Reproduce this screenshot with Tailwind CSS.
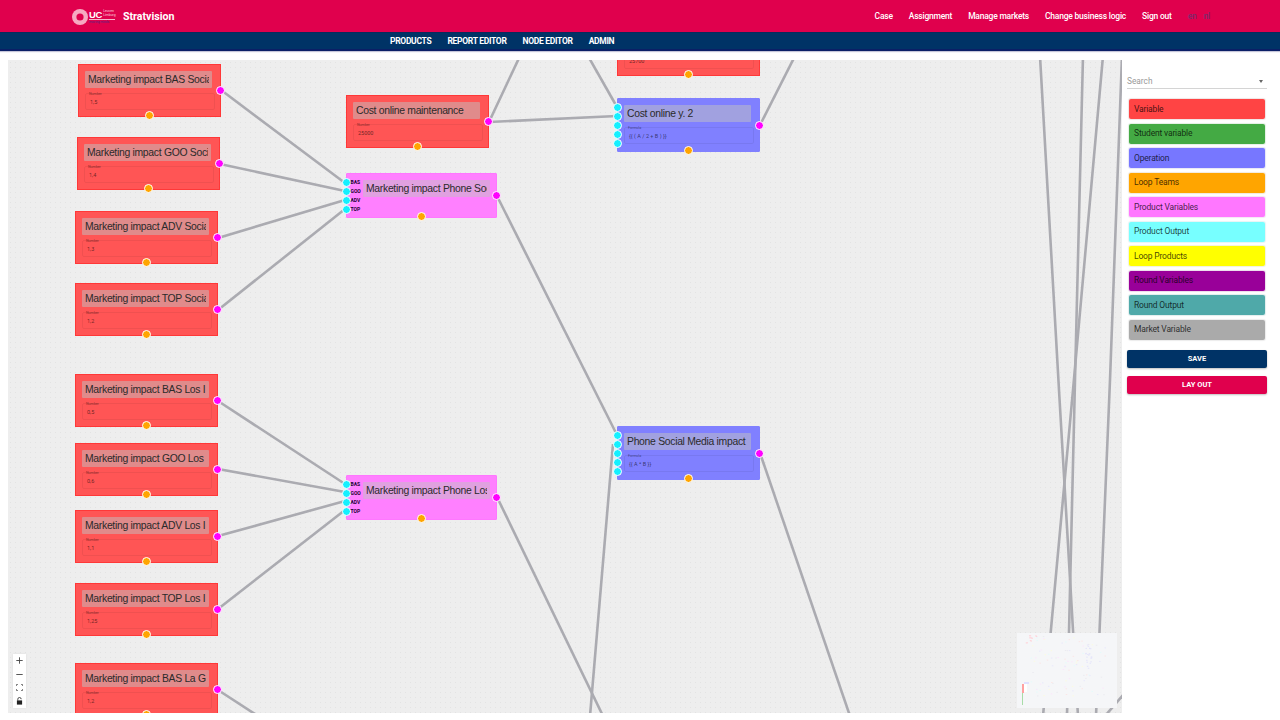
<!DOCTYPE html>
<html lang="en">
<head>
    <meta charset="UTF-8">
    <title>Stratvision</title>
    <script src="https://cdn.jsdelivr.net/npm/@tailwindcss/browser@4"></script>
</head>
<body class="bg-white h-[720px] overflow-hidden font-['Roboto',sans-serif] text-gray-800">

<!-- Top bar -->
<header class="h-[32px] pt-[1px] bg-[#e0004d] flex items-center justify-between pl-[71px] pr-[70px] text-white">
    <div class="flex items-center">
        <svg width="18" height="18" viewBox="0 0 18 18" class="shrink-0"><circle cx="9" cy="9" r="8" fill="#f6a9c1"/><circle cx="9" cy="9" r="3.6" fill="#e0004d"/></svg>
        <div class="w-[26px] leading-none">
            <div class="flex items-center">
                <span class="text-[9.5px] leading-[9px] font-bold font-['Liberation_Sans',sans-serif] tracking-[-0.3px]">UC</span>
                <span class="ml-[1px] text-[3.4px] leading-[3.6px] text-[#fbd3df] whitespace-nowrap">Leuven<br>Limburg</span>
            </div>
            <div class="border-t border-white/70 text-[3.2px] leading-[4px] text-[#4a2a86] whitespace-nowrap">moving minds</div>
        </div>
        <span class="ml-[8px] text-[10.6px] font-bold">Stratvision</span>
    </div>
    <nav class="flex items-center gap-4 text-[8.5px] tracking-[-0.22px] font-medium whitespace-nowrap">
        <a>Case</a>
        <a>Assignment</a>
        <a>Manage markets</a>
        <a>Change business logic</a>
        <a>Sign out</a>
        <span class="flex gap-[7px] text-[#7d2a6c]"><a>en</a><a>nl</a></span>
    </nav>
</header>

<!-- Sub nav -->
<div class="h-[19px] pt-[1px] bg-[#003366] border-t border-t-[#0a2a5c] border-b-2 border-b-[#0b1f66] flex items-center gap-4 pl-[390px] text-[8.5px] tracking-[-0.3px] font-bold text-white whitespace-nowrap shadow-[0_1px_1px_#c5c5d8]">
    <a>PRODUCTS</a>
    <a>REPORT EDITOR</a>
    <a>NODE EDITOR</a>
    <a>ADMIN</a>
</div>

<main class="flex pt-[9px]">
    <!-- Flow canvas -->
    <div id="canvas" class="relative ml-[8px] w-[1114px] h-[653px] overflow-hidden bg-[#eeeeee] bg-[radial-gradient(circle,#e3e3e3_0.5px,transparent_0.7px)] bg-[length:5px_5px]">
        <svg id="edges" class="absolute inset-0" width="1114" height="653" viewBox="8 60 1114 653" fill="none" stroke="#ababb1" stroke-width="2.6"></svg>
        <div id="nodes"></div>

        <!-- zoom controls -->
        <div class="absolute left-[5px] top-[594px] w-[13px] bg-white flex flex-col text-black shadow-[0_0_2px_rgba(0,0,0,0.08)]">
            <button class="h-[13.5px] flex items-center justify-center">
                <svg width="7" height="7" viewBox="0 0 7 7" stroke="#444" stroke-width="0.9"><path d="M3.5 0.3v6.4M0.3 3.5h6.4"/></svg>
            </button>
            <button class="h-[13.5px] flex items-center justify-center">
                <svg width="7" height="7" viewBox="0 0 7 7" stroke="#444" stroke-width="0.9"><path d="M0.3 3.5h6.4"/></svg>
            </button>
            <button class="h-[13.5px] flex items-center justify-center">
                <svg width="7" height="7" viewBox="0 0 7 7" fill="none" stroke="#555" stroke-width="0.8"><path d="M0.4 2V0.4H2M5 0.4h1.6V2M6.6 5v1.6H5M2 6.6H0.4V5"/></svg>
            </button>
            <button class="h-[13.5px] flex items-center justify-center">
                <svg width="7" height="8" viewBox="0 0 7 8"><path d="M1.8 3.5V2.2a1.7 1.7 0 0 1 3.4 0" fill="none" stroke="#222" stroke-width="0.8"/><rect x="0.9" y="3.4" width="5.2" height="4.2" fill="#222"/></svg>
            </button>
        </div>

        <!-- minimap -->
        <svg id="minimap" class="absolute left-[1009px] top-[573px]" width="100" height="75" viewBox="1017 633 100 75"></svg>
    </div>

    <!-- Sidebar -->
    <aside class="ml-[5px] w-[140px] shrink-0">
        <div class="mt-[15px] h-[14px] border-b border-[#d4d4d4] flex items-center justify-between text-[8.3px] text-[#9a9a9a]">
            <span>Search</span>
            <span class="mr-[4px] w-0 h-0 border-x-[2.5px] border-x-transparent border-t-[3px] border-t-[#666]"></span>
        </div>
        <div class="mt-[10px] pl-[2px] pr-[2.5px] flex flex-col gap-[4.5px] text-[8.5px] tracking-[-0.17px] text-black/75">
            <div class="h-[20px] pl-[5px] flex items-center rounded-[2px] bg-[#ff4444] shadow-[0_0_1px_1px_#f0e4e4]">Variable</div>
            <div class="h-[20px] pl-[5px] flex items-center rounded-[2px] bg-[#44aa44] shadow-[0_0_1px_1px_#e4f0e4]">Student variable</div>
            <div class="h-[20px] pl-[5px] flex items-center rounded-[2px] bg-[#7777ff] shadow-[0_0_1px_1px_#e6e6f6]">Operation</div>
            <div class="h-[20px] pl-[5px] flex items-center rounded-[2px] bg-[#ffa500] shadow-[0_0_1px_1px_#f2eadc]">Loop Teams</div>
            <div class="h-[20px] pl-[5px] flex items-center rounded-[2px] bg-[#ff77ff] shadow-[0_0_1px_1px_#f4e6f4]">Product Variables</div>
            <div class="h-[20px] pl-[5px] flex items-center rounded-[2px] bg-[#77ffff] shadow-[0_0_1px_1px_#e6f4f4]">Product Output</div>
            <div class="h-[20px] pl-[5px] flex items-center rounded-[2px] bg-[#ffff00] shadow-[0_0_1px_1px_#f2f2dc]">Loop Products</div>
            <div class="h-[20px] pl-[5px] flex items-center rounded-[2px] bg-[#990099] shadow-[0_0_1px_1px_#ecdcec]">Round Variables</div>
            <div class="h-[20px] pl-[5px] flex items-center rounded-[2px] bg-[#4fa9a9] shadow-[0_0_1px_1px_#e2eeee]">Round Output</div>
            <div class="h-[20px] pl-[5px] flex items-center rounded-[2px] bg-[#aaaaaa] shadow-[0_0_1px_1px_#ececec]">Market Variable</div>
        </div>
        <button class="mt-[10px] block w-full h-[18px] bg-[#003366] rounded-[2px] text-white text-[7.5px] font-bold shadow-[0_1px_2px_rgba(0,0,0,0.25)]">SAVE</button>
        <button class="mt-[8px] block w-full h-[18px] bg-[#e0004d] rounded-[2px] text-white text-[7.5px] font-bold shadow-[0_1px_2px_rgba(0,0,0,0.25)]">LAY OUT</button>
    </aside>
</main>

<script>
    // page coordinates, taken off the picture
    const edges = [
        "221,90 345,183", "220,164 345,191", "218,238 345,200", "218,310 345,209",
        "218,401 345,484", "218,469 345,492", "218,536 345,501", "218,609 345,510",
        "218,690 258,716",
        "489,122 617,116", "489,122 520,56", "588,56 617,107", "760,125 795,56",
        "497,196 617,435", "497,497 603,716", "613,444 590,716", "760,453 850,716",
        "1040,56 1059,390 1078,716", "1083,56 1075,380 1067,716",
        "1103,56 1073,390 1043,716", "1122,56 1110,380 1096,716",
        "1105,716 1124,694"
    ];

    const R = "bg-[#ff5555] border-[#ff3838]";
    const B = "bg-[#8080ff] border-[#8080ff] rounded-[1px]";
    const P = "bg-[#ff80ff] border-[#ff77ff] rounded-[1px]";

    const nodes = [
        { x: 78, y: 64, t: "Marketing impact BAS Socia", k: "Number", v: "1,5" },
        { x: 77, y: 137, t: "Marketing impact GOO Soci", k: "Number", v: "1,4" },
        { x: 75, y: 211, t: "Marketing impact ADV Socia", k: "Number", v: "1,3" },
        { x: 75, y: 283, t: "Marketing impact TOP Socia", k: "Number", v: "1,2" },
        { x: 75, y: 374, t: "Marketing impact BAS Los I", k: "Number", v: "0,5" },
        { x: 75, y: 443, t: "Marketing impact GOO Los", k: "Number", v: "0,6" },
        { x: 75, y: 510, t: "Marketing impact ADV Los I", k: "Number", v: "1,1" },
        { x: 75, y: 583, t: "Marketing impact TOP Los I", k: "Number", v: "1,25" },
        { x: 75, y: 663, t: "Marketing impact BAS La Ga", k: "Number", v: "1,2" },
        { x: 346, y: 95, t: "Cost online maintenance", k: "Number", v: "25000" },
        { x: 617, y: 23, t: "Cost online y. 1", k: "Number", v: "25700" },
        { x: 617, y: 98, t: "Cost online y. 2", k: "Formula", v: "{{ ( A / 2 + B ) }}", c: B, ports: 5 },
        { x: 617, y: 426, t: "Phone Social Media impact", k: "Formula", v: "{{ A * B }}", c: B, ports: 5 },
        { x: 346, y: 173, t: "Marketing impact Phone Soc", c: P, ports: 4 },
        { x: 346, y: 475, t: "Marketing impact Phone Los", c: P, ports: 4 }
    ];

    const labels = ["BAS", "GOO", "ADV", "TOP"];
    const dot = "absolute w-[9px] h-[9px] rounded-full border border-white";

    function nodeHtml(n) {
        const product = n.ports === 4;
        const w = product ? 151 : 143;
        const h = product ? 45 : (n.ports ? 54 : 53);
        let ports = "";
        for (let i = 0; i < (n.ports || 0); i++) {
            const top = 3.5 + i * 9;
            ports += `<span class="${dot} bg-[#14f0ff] left-[-5px]" style="top:${top}px"></span>`;
            if (product) {
                ports += `<span class="absolute left-[3.5px] text-[5px] leading-[6px] font-bold text-[#220033]" style="top:${top + 1.5}px">${labels[i]}</span>`;
            }
        }
        const field = n.k ? `
            <div class="absolute left-[6px] top-[28px] w-[129.5px] h-[17px] border border-black/[0.06] rounded-[2px]">
                <span class="absolute left-[3px] top-[-2.5px] text-[3.6px] leading-[4px] text-black/50">${n.k}</span>
                <span class="absolute left-[4px] top-[5px] text-[5.5px] leading-[7px] text-black/60">${n.v}</span>
            </div>` : "";
        const titleLeft = product ? "left-[16px]" : "left-[6px]";
        return `
        <div class="absolute border ${n.c || R}" style="left:${n.x - 8}px;top:${n.y - 60}px;width:${w}px;height:${h}px">
            <div class="absolute ${titleLeft} top-[6px] w-[127px] h-[17px] bg-[#c2c2c2]/50 rounded-[1px] px-[3px]">
                <div class="overflow-hidden whitespace-nowrap text-[10.4px] tracking-[-0.3px] leading-[17px] text-[#2a2a2a] font-['Liberation_Sans',sans-serif]">${n.t}</div>
            </div>
            ${field}
            ${ports}
            <span class="${dot} bg-[#ff00ff] right-[-5px]" style="top:${h / 2 - 5.3}px"></span>
            <span class="${dot} bg-[#ffa500] bottom-[-3.5px]" style="left:${w / 2 - 5.3}px"></span>
        </div>`;
    }

    document.getElementById("edges").innerHTML = edges
        .map(p => `<polyline points="${p}"/>`).join("");
    document.getElementById("nodes").innerHTML = nodes.map(nodeHtml).join("");

    // minimap: a little deterministic scatter plus the coloured cluster bottom left
    const mini = [`<rect x="1017" y="633" width="100" height="75" fill="#f5f6f8"/>`];
    const tint = ["#fbe6e6", "#e8e8fb", "#fbe6fb", "#e4fbfb", "#fbfbe0", "#ebebf0"];
    let seed = 7;
    const rnd = () => (seed = (seed * 9301 + 49297) % 233280) / 233280;
    for (let i = 0; i < 90; i++) {
        const x = 1030 + rnd() * 78, y = 636 + rnd() * 60;
        mini.push(`<rect x="${x}" y="${y}" width="1.5" height="1" fill="${tint[i % 6]}"/>`);
    }
    for (let i = 0; i < 22; i++) {
        const x = 1085 + rnd() * 6, y = 644 + rnd() * 24;
        mini.push(`<rect x="${x}" y="${y}" width="1.5" height="1" fill="#e4e4fa"/>`);
    }
    for (let i = 0; i < 12; i++) {
        const x = 1025 + rnd() * 12, y = 635 + rnd() * 10;
        mini.push(`<rect x="${x}" y="${y}" width="1.5" height="1" fill="#ffd4da"/>`);
    }
    mini.push(`<rect x="1022" y="684" width="2" height="9" fill="#ffa0a0"/>`);
    mini.push(`<rect x="1022" y="693" width="1" height="12" fill="#a8dca8"/>`);
    mini.push(`<rect x="1024" y="684" width="3" height="8" fill="#ffffff"/>`);
    mini.push(`<rect x="1024" y="682" width="5" height="2" fill="#e0e0ff"/>`);
    document.getElementById("minimap").innerHTML = mini.join("");
</script>

</body>
</html>
